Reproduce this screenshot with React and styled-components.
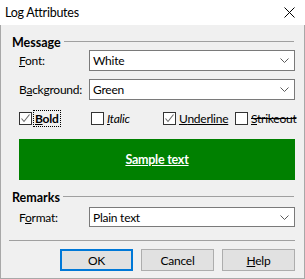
import React from "react";
import styled, { createGlobalStyle } from "styled-components";

const Global = createGlobalStyle`
  html, body { margin: 0; padding: 0; background: #fff; }
  body { font-family: Lato, "Noto Sans", sans-serif; font-size: 12px; line-height: 15px; letter-spacing: -0.25px; color: #000; }
  * { box-sizing: border-box; }
`;

const Window = styled.div`
  width: 305px;
  height: 279px;
  display: flex;
  flex-direction: column;
  background: #fff;
`;

const TitleBar = styled.div`
  height: 25px;
  flex: none;
  display: flex;
  align-items: center;
  justify-content: space-between;
  padding: 0 10px 0 5px;
  background: #fff;
  font-size: 12.5px;
`;

const Body = styled.div`
  flex: 1;
  background: #f0f0f0;
  border: 1px solid #a8a8a8;
  border-top: none;
  padding: 0 9px 0 8px;
  display: flex;
  flex-direction: column;
`;

const GroupHead = styled.div`
  display: flex;
  align-items: center;
  gap: 3px;
  height: 14px;
  flex: none;
  margin-top: ${(p) => p.$top}px;
  padding-left: 3px;
  font-weight: 700;
  font-size: 12.5px;
  letter-spacing: 0;
  &::after {
    content: "";
    flex: 1;
    height: 1px;
    background: #a0a0a0;
    margin-right: 1px;
    margin-top: -1px;
  }
`;

const Row = styled.div`
  display: flex;
  align-items: center;
  flex: none;
  padding-left: 10px;
  margin-top: ${(p) => p.$top}px;
`;

const Label = styled.span`
  width: 70px;
  flex: none;
`;

const Combo = styled.div`
  flex: 1;
  height: ${(p) => p.$h || 21}px;
  background: #fff;
  border: 1px solid #7a7a7a;
  display: flex;
  align-items: center;
  justify-content: space-between;
  padding: 0 5px 0 3px;
`;

const U = styled.span`
  text-decoration: underline;
`;

const CheckRow = styled.div`
  display: flex;
  align-items: center;
  flex: none;
  padding-left: 10px;
  margin-top: 10px;
  height: 16px;
`;

const CheckItem = styled.div`
  display: flex;
  align-items: center;
  gap: 2px;
  width: ${(p) => p.$w}px;
  flex: none;
`;

const Box = styled.span`
  width: 13px;
  height: 13px;
  border: 1px solid #333;
  background: #fff;
  display: flex;
  align-items: center;
  justify-content: center;
  flex: none;
`;

const CheckText = styled.span`
  font-weight: ${(p) => (p.$bold ? 700 : 400)};
  font-style: ${(p) => (p.$italic ? "italic" : "normal")};
  text-decoration: ${(p) => p.$deco || "none"};
  outline: ${(p) => (p.$focus ? "1px dotted #000" : "none")};
  outline-offset: 0;
  padding: 0 1px;
  line-height: 15px;
`;

const Sample = styled.div`
  flex: none;
  margin: 13px 0 0 10px;
  height: 41px;
  background: #008000;
  color: #fff;
  font-weight: 700;
  font-size: 12.5px;
  text-decoration: underline;
  display: flex;
  align-items: center;
  justify-content: center;
`;

const Separator = styled.div`
  flex: none;
  height: 1px;
  background: #a0a0a0;
  margin-top: 13px;
`;

const Buttons = styled.div`
  display: flex;
  flex: none;
  justify-content: flex-end;
  gap: 8px;
  margin-top: 8px;
`;

const Button = styled.div`
  width: 73px;
  height: 22px;
  background: #e1e1e1;
  border: ${(p) => (p.$default ? "2px solid #0078d7" : "1px solid #adadad")};
  display: flex;
  align-items: center;
  justify-content: center;
`;

const Chevron = () => (
  <svg width="9" height="5" viewBox="0 0 9 5">
    <path d="M0.5 0.5 L4.5 4.5 L8.5 0.5" fill="none" stroke="#5a5a5a" strokeWidth="1" />
  </svg>
);

const Check = () => (
  <svg width="11" height="11" viewBox="0 0 11 11">
    <path d="M1.5 5.5 L4 8.5 L9.5 1.5" fill="none" stroke="#6a6a6a" strokeWidth="1.1" />
  </svg>
);

const Close = () => (
  <svg width="11" height="11" viewBox="0 0 11 11">
    <path d="M0.5 0.5 L10.5 10.5 M10.5 0.5 L0.5 10.5" stroke="#000" strokeWidth="1" />
  </svg>
);

export default function App() {
  return (
    <>
      <Global />
      <Window>
        <TitleBar>
          <span>Log Attributes</span>
          <Close />
        </TitleBar>
        <Body>
          <GroupHead $top={10}>Message</GroupHead>
          <Row $top={1}>
            <Label><U>F</U>ont:</Label>
            <Combo>White<Chevron /></Combo>
          </Row>
          <Row $top={8}>
            <Label>B<U>a</U>ckground:</Label>
            <Combo>Green<Chevron /></Combo>
          </Row>
          <CheckRow>
            <CheckItem $w={72}>
              <Box><Check /></Box>
              <CheckText $bold $focus><U>B</U>old</CheckText>
            </CheckItem>
            <CheckItem $w={72}>
              <Box />
              <CheckText $italic><U>I</U>talic</CheckText>
            </CheckItem>
            <CheckItem $w={72}>
              <Box><Check /></Box>
              <CheckText $deco="underline"><U>U</U>nderline</CheckText>
            </CheckItem>
            <CheckItem $w={60}>
              <Box />
              <CheckText $deco="line-through"><U>S</U>trikeout</CheckText>
            </CheckItem>
          </CheckRow>
          <Sample>Sample text</Sample>
          <GroupHead $top={10}>Remarks</GroupHead>
          <Row $top={3}>
            <Label>F<U>o</U>rmat:</Label>
            <Combo $h={20}>Plain text<Chevron /></Combo>
          </Row>
          <Separator />
          <Buttons>
            <Button $default>OK</Button>
            <Button>Cancel</Button>
            <Button><span><U>H</U>elp</span></Button>
          </Buttons>
        </Body>
      </Window>
    </>
  );
}
